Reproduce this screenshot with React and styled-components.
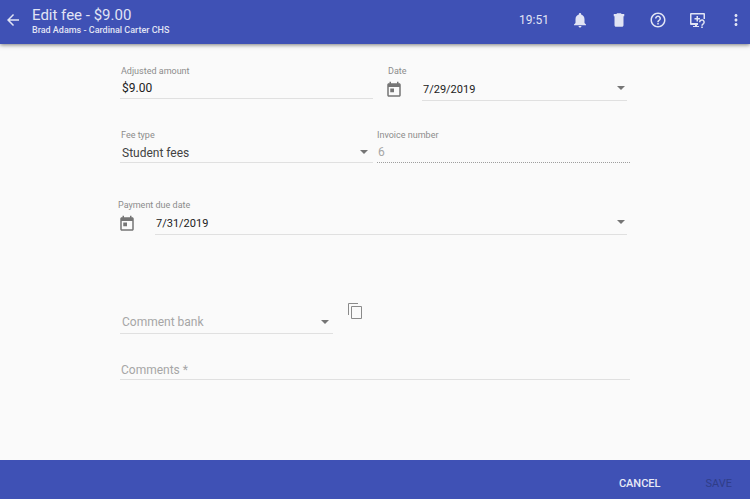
import React, { useState } from "react";
import styled, { createGlobalStyle } from "styled-components";

const GlobalStyle = createGlobalStyle`
  *, *::before, *::after { box-sizing: border-box; }
  body {
    margin: 0;
    background: #fafafa;
    color: #212121;
    font-family: Roboto, "Liberation Sans", sans-serif;
  }
  button, input, select { font-family: inherit; margin: 0; }
`;

const Page = styled.div`
  display: flex;
  flex-direction: column;
  min-height: 100vh;
`;

const TopBar = styled.header`
  display: flex;
  align-items: center;
  height: 44px;
  padding: 0 5px 4px 4px;
  background: #3f51b5;
  color: #e1e4f4;
  box-shadow: 0 1px 4px rgba(0, 0, 0, 0.5);
`;

const IconButton = styled.button`
  display: flex;
  align-items: center;
  justify-content: center;
  width: 18px;
  height: 18px;
  padding: 0;
  border: 0;
  background: none;
  color: inherit;
  cursor: pointer;
`;

const Icon = styled.svg`
  display: block;
  flex: none;
  width: 18px;
  height: 18px;
  fill: currentColor;
`;

const Heading = styled.div`
  flex: 1;
  padding: 2px 0 0 10px;
  white-space: nowrap;
`;

const Title = styled.h1`
  margin: 0;
  font-size: 15px;
  font-weight: 400;
  line-height: 18px;
`;

const Subtitle = styled.p`
  margin: 0;
  font-size: 9px;
  font-weight: 500;
  line-height: 12px;
`;

const Clock = styled.time`
  padding-right: 22px;
  font-size: 12px;
  font-weight: 400;
`;

const Actions = styled.div`
  display: flex;
  align-items: center;
  gap: 21px;
`;

const Form = styled.form`
  flex: 1;
  display: flex;
  flex-direction: column;
  padding: 20px 120px 16px 118px;
`;

const Row = styled.div`
  display: grid;
  grid-template-columns: ${(p) => p.$columns || "1fr 1fr"};
  align-items: start;
  column-gap: ${(p) => p.$gap || 4}px;
  margin-top: ${(p) => p.$top || 0}px;
  padding-left: ${(p) => (p.$flush ? 0 : 2)}px;
`;

const Field = styled.div`
  display: flex;
  flex-direction: column;
  min-width: 0;
  padding: ${(p) => p.$padding || 0};
`;

const Label = styled.label`
  padding-left: ${(p) => p.$indent || 0}px;
  color: #8c8c8c;
  font-size: 9px;
  line-height: 14px;
`;

const Control = styled.div`
  display: flex;
  align-items: center;
  border-bottom: 1px ${(p) => (p.$disabled ? "dotted #9e9e9e" : "solid #e0e0e0")};
`;

const controlText = `
  flex: 1;
  width: 100%;
  min-width: 0;
  border: 0;
  border-radius: 0;
  outline: 0;
  background: none;
`;

const TextInput = styled.input`
  ${controlText}
  height: ${(p) => p.$height || 20}px;
  padding: ${(p) => p.$padding || "0 2px"};
  color: inherit;
  font-size: ${(p) => p.$size || 12}px;
  &::placeholder { color: #a6a6a6; opacity: 1; }
  &:disabled { color: #a6a6a6; }
`;

const SelectBox = styled.div`
  display: grid;
  align-items: center;
  border-bottom: 1px solid #e0e0e0;
  > * { grid-area: 1 / 1; }
  > svg { justify-self: end; pointer-events: none; }
`;

const Select = styled.select`
  ${controlText}
  appearance: none;
  height: ${(p) => p.$height || 20}px;
  padding: ${(p) => p.$padding || "2px 20px 0 2px"};
  color: ${(p) => (p.$empty ? "#a6a6a6" : "#424242")};
  font-size: 12px;
`;

const Caret = styled.svg`
  width: 8px;
  height: 4px;
  margin-right: ${(p) => p.$inset || 0}px;
  fill: #757575;
`;

const CaretButton = styled.button`
  display: flex;
  padding: 4px 2px 6px;
  border: 0;
  background: none;
  cursor: pointer;
`;

const DateLine = styled.div`
  display: grid;
  grid-template-columns: 18px 1fr;
  column-gap: 19px;
  align-items: center;
  color: #757575;
`;

const DateControl = styled(Control)`
  color: #212121;
`;

const CopyButton = styled(IconButton)`
  color: #8a8a8a;
`;

const BottomBar = styled.footer`
  display: flex;
  justify-content: flex-end;
  align-items: center;
  gap: 45px;
  height: 39px;
  padding: 9px 18px 0 0;
  background: #3f51b5;
`;

const TextButton = styled.button`
  padding: 0;
  border: 0;
  background: none;
  color: #e8eaf6;
  font-size: 11px;
  font-weight: 500;
  line-height: 16px;
  text-transform: uppercase;
  cursor: pointer;
  &:disabled { color: #2f3d88; font-weight: 400; cursor: default; }
`;

const paths = {
  back: "M20 11H7.83l5.59-5.59L12 4l-8 8 8 8 1.41-1.41L7.83 13H20v-2z",
  bell: "M12 22c1.1 0 2-.9 2-2h-4c0 1.1.89 2 2 2zm6-6v-5c0-3.07-1.64-5.64-4.5-6.32V4c0-.83-.67-1.5-1.5-1.5s-1.5.67-1.5 1.5v.68C7.63 5.36 6 7.92 6 11v5l-2 2v1h16v-1l-2-2z",
  trash: "M6 19c0 1.1.9 2 2 2h8c1.1 0 2-.9 2-2V7H6v12zM19 4h-3.5l-1-1h-5l-1 1H5v3h14V4z",
  help: "M11 18h2v-2h-2v2zm1-16C6.48 2 2 6.48 2 12s4.48 10 10 10 10-4.48 10-10S17.52 2 12 2zm0 18c-4.41 0-8-3.59-8-8s3.59-8 8-8 8 3.59 8 8-3.59 8-8 8zm0-14c-2.21 0-4 1.79-4 4h2c0-1.1.9-2 2-2s2 .9 2 2c0 2-3 1.75-3 5h2c0-2.25 3-2.5 3-5 0-2.21-1.79-4-4-4z",
  more: "M12 8c1.1 0 2-.9 2-2s-.9-2-2-2-2 .9-2 2 .9 2 2 2zm0 2c-1.1 0-2 .9-2 2s.9 2 2 2 2-.9 2-2-.9-2-2-2zm0 6c-1.1 0-2 .9-2 2s.9 2 2 2 2-.9 2-2-.9-2-2-2z",
  today: "M19 3h-1V1h-2v2H8V1H6v2H5c-1.11 0-1.99.9-1.99 2L3 19c0 1.1.89 2 2 2h14c1.1 0 2-.9 2-2V5c0-1.1-.9-2-2-2zm0 16H5V8h14v11zM7 10h5v5H7z",
};

function Glyph({ name }) {
  return (
    <Icon viewBox="0 0 24 24" aria-hidden="true">
      <path d={paths[name]} />
    </Icon>
  );
}

function RemoteHelpIcon() {
  return (
    <Icon viewBox="0 0 18 18" aria-hidden="true">
      <path d="M3 2h13a1 1 0 0 1 1 1v5h-1.5V3.5h-12V12H10v2H9v1h2v1H5v-1h2v-1H3a1 1 0 0 1-1-1V3a1 1 0 0 1 1-1z" />
      <path d="M8.5 5H10v2h2v1.5h-2v2H8.500v-2h-2V7h2z" />
      <path d="M11.700 11.200a2.200 2.200 0 1 1 4 1.200c-.6.8-1.700 1-1.700 2.400" fill="none" stroke="currentColor" strokeWidth="1.500" />
      <path d="M13.200 15.500h1.600V17h-1.600z" />
    </Icon>
  );
}

function DropCaret({ inset }) {
  return (
    <Caret viewBox="0 0 8 4" $inset={inset} aria-hidden="true">
      <path d="M0 0h8L4 4z" />
    </Caret>
  );
}

function DateField({ id, label, initial, padding, indent }) {
  const [value, setValue] = useState(initial);
  return (
    <Field $padding={padding}>
      <Label htmlFor={id} $indent={indent}>{label}</Label>
      <DateLine>
        <Glyph name="today" />
        <DateControl>
          <TextInput id={id} $size={11} $height={22} $padding="0 1px" value={value} onChange={(e) => setValue(e.target.value)} />
          <CaretButton type="button" aria-label={`Choose ${label.toLowerCase()}`}>
            <DropCaret />
          </CaretButton>
        </DateControl>
      </DateLine>
    </Field>
  );
}

export default function App() {
  const [amount, setAmount] = useState("$9.00");
  const [comments, setComments] = useState("");
  const [bank, setBank] = useState("");

  return (
    <Page>
      <GlobalStyle />
      <TopBar>
        <IconButton type="button" aria-label="Back"><Glyph name="back" /></IconButton>
        <Heading>
          <Title>Edit fee - $9.00</Title>
          <Subtitle>Brad Adams - Cardinal Carter CHS</Subtitle>
        </Heading>
        <Clock>19:51</Clock>
        <Actions>
          <IconButton type="button" aria-label="Notifications"><Glyph name="bell" /></IconButton>
          <IconButton type="button" aria-label="Delete"><Glyph name="trash" /></IconButton>
          <IconButton type="button" aria-label="Help"><Glyph name="help" /></IconButton>
          <IconButton type="button" aria-label="Remote support"><RemoteHelpIcon /></IconButton>
          <IconButton type="button" aria-label="More"><Glyph name="more" /></IconButton>
        </Actions>
      </TopBar>

      <Form id="fee" onSubmit={(e) => e.preventDefault()}>
        <Row>
          <Field>
            <Label htmlFor="amount" $indent={1}>Adjusted amount</Label>
            <Control>
              <TextInput id="amount" value={amount} onChange={(e) => setAmount(e.target.value)} />
            </Control>
          </Field>
          <DateField id="date" label="Date" initial="7/29/2019" padding="0 3px 0 8px" indent={3} />
        </Row>

        <Row $top={27}>
          <Field>
            <Label htmlFor="type" $indent={1}>Fee type</Label>
            <SelectBox>
              <Select id="type" defaultValue="student">
                <option value="student">Student fees</option>
              </Select>
              <DropCaret inset={5} />
            </SelectBox>
          </Field>
          <Field>
            <Label htmlFor="invoice">Invoice number</Label>
            <Control $disabled>
              <TextInput id="invoice" $padding="0 1px" value="6" disabled readOnly />
            </Control>
          </Field>
        </Row>

        <Row $top={35} $columns="1fr" $flush>
          <DateField id="due" label="Payment due date" initial="7/31/2019" padding="0 3px 0 0" />
        </Row>

        <Row $top={67} $columns="213px 18px" $gap={13}>
          <Field $padding="9px 0 0">
            <SelectBox>
              <Select id="bank" aria-label="Comment bank" $height={22} $padding="0 20px 0 2px" $empty={!bank} value={bank} onChange={(e) => setBank(e.target.value)}>
                <option value="">Comment bank</option>
              </Select>
              <DropCaret inset={4} />
            </SelectBox>
          </Field>
          <CopyButton type="button" aria-label="Copy comment">
            <Icon viewBox="0 0 18 18" aria-hidden="true">
              <path d="M2.5 13V1.5H12M5.5 4.5h10v12h-10z" fill="none" stroke="currentColor" />
            </Icon>
          </CopyButton>
        </Row>

        <Row $top={25} $columns="1fr">
          <Control>
            <TextInput $padding="2px 1px 0" aria-label="Comments" placeholder="Comments *" required value={comments} onChange={(e) => setComments(e.target.value)} />
          </Control>
        </Row>
      </Form>

      <BottomBar>
        <TextButton type="button">Cancel</TextButton>
        <TextButton type="submit" form="fee" disabled>Save</TextButton>
      </BottomBar>
    </Page>
  );
}
